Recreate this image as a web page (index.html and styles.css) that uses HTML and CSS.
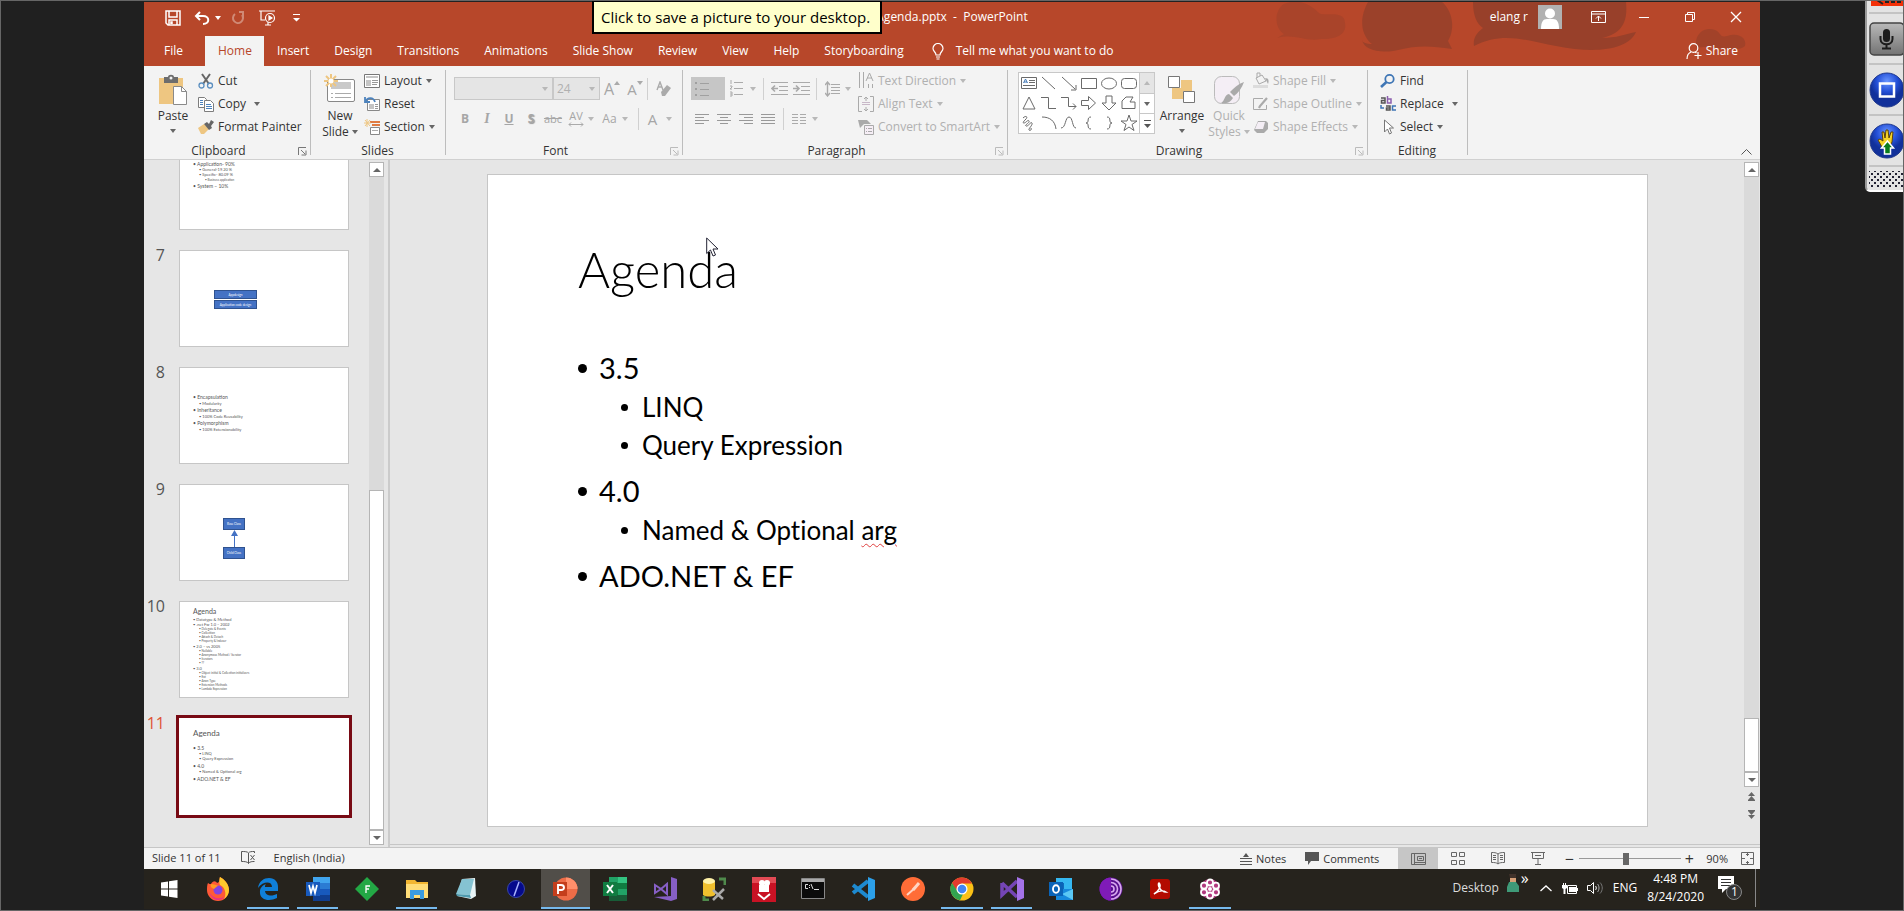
FILE: index.html
```html
<!DOCTYPE html>
<html lang="en">
<head>
<meta charset="utf-8">
<title>Agenda.pptx - PowerPoint</title>
<link rel="stylesheet" href="styles.css">
</head>
<body>
<div class="app">
  <header class="header">
    <svg class="header-art" width="500" height="64" viewBox="0 0 500 64" aria-hidden="true">
      <g fill="#98402a">
        <path opacity=".45" d="M24 2C14 8 14 26 24 32l-7 4c18-5 28 4 44 1 18 0 26-6 24-16 0-14-22-6-26-10C50 2 38-4 24 2z"/>
        <path opacity=".9" d="M108 0C98 18 102 34 112 42c-6 0-10-2-10-4 2 10 18 14 36 10 20-5 34-4 54-1l-4-8C196 26 192 8 182 0z"/>
        <path d="M213 0c0 14 4 22 10 26-8 6-10 12-9 18 30-16 56-4 82 0 40 8 72 4 80-14-10 2-20 6-34 6 20-4 26-16 24-36z"/>
        <path opacity=".7" d="M437 46c-4-12 6-22 18-18 6 2 4 8 12 6 12-4 20 2 18 10-8 8-34-2-48 2z"/>
      </g>
    </svg>
    <div class="titlebar">
      <div class="quick">
        <button class="q-save" aria-label="Save"><svg width="16" height="16" viewBox="0 0 16 16" fill="none" stroke="#fff" stroke-width="1.5"><path d="M1 1h14v14H3l-2-2z"/><path d="M4 1v6h8V1M4 15v-5h8v5M6 14v-2h1v2" /></svg></button>
        <button class="q-undo" aria-label="Undo"><svg width="17" height="15" viewBox="0 0 17 15" fill="none" stroke="#fff" stroke-width="2"><path d="M6 1L2 5l4 4M2 5h7c7 0 7 8 0 8"/></svg><span class="caret"></span></button>
        <button class="q-redo" aria-label="Redo"><svg width="15" height="15" viewBox="0 0 15 15" fill="none" stroke="#d08a76" stroke-width="2"><path d="M4 3a5 5 0 1 0 7 1M8 1h4v5"/></svg></button>
        <button class="q-show" aria-label="Start From Beginning"><svg width="18" height="16" viewBox="0 0 18 16" fill="none" stroke="#fff" stroke-width="1.2"><path d="M0 1h16M2 1v9h4M6 15h6M9 12v3"/><circle cx="11" cy="8" r="4.5"/><path d="M10 6l3 2-3 2z" fill="#fff"/></svg></button>
        <button class="q-more" aria-label="Customize"><svg width="7" height="8" viewBox="0 0 7 8" fill="#fff"><path d="M0 0h7v1H0zM0 4h7L3.500 7.500z"/></svg></button>
      </div>
      <div class="doc-title">Agenda.pptx&nbsp; -&nbsp; PowerPoint</div>
      <div class="window-tools">
        <span class="user">elang r</span>
        <svg class="avatar" width="24" height="24" viewBox="0 0 24 24"><path fill="#b1b1b1" d="M0 0h24v24H0z"/><circle cx="12" cy="8.500" r="5" fill="#fff"/><path d="M3 24c0-7 2-10 6-10h6c4 0 6 3 6 10z" fill="#fff"/></svg>
        <button aria-label="Ribbon Display Options"><svg width="15" height="12" viewBox="0 0 15 12" fill="none" stroke="#fff"><path d="M.5.5h14v11H.5zM.5 3h14M7.500 10V5M5 7.500L7.500 5 10 7.500"/></svg></button>
        <button aria-label="Minimize"><svg width="12" height="12" viewBox="0 0 12 12" stroke="#fff"><path d="M1 6.500h10"/></svg></button>
        <button aria-label="Restore"><svg width="12" height="12" viewBox="0 0 12 12" fill="none" stroke="#fff"><path d="M1.500 3.500h7v7h-7zM3.500 3.500v-2h7v7h-2"/></svg></button>
        <button aria-label="Close"><svg width="12" height="12" viewBox="0 0 12 12" stroke="#fff" stroke-width="1.300"><path d="M1 1l10 10M11 1L1 11"/></svg></button>
      </div>
    </div>
    <nav class="tabs">
      <button class="tab tab-file">File</button>
      <button class="tab tab-on">Home</button>
      <button class="tab">Insert</button>
      <button class="tab">Design</button>
      <button class="tab">Transitions</button>
      <button class="tab">Animations</button>
      <button class="tab">Slide Show</button>
      <button class="tab">Review</button>
      <button class="tab">View</button>
      <button class="tab">Help</button>
      <button class="tab">Storyboarding</button>
      <button class="tab tell"><svg width="12" height="17" viewBox="0 0 12 17" fill="none" stroke="#fff" stroke-width="1.200"><path d="M4 12c0-3-3-3.500-3-6.500a5 5 0 0 1 10 0C11 8.500 8 9 8 12zM4 14h4M4.500 16h3"/></svg>Tell me what you want to do</button>
      <button class="share"><svg width="16" height="16" viewBox="0 0 16 16" fill="none" stroke="#fff" stroke-width="1.200"><circle cx="7.500" cy="5" r="4.300"/><path d="M1 16c0-4 1.500-6 4-7M9 9l1.500 1M12 9v7M8.500 12.500h7"/></svg>Share</button>
    </nav>
  </header>

  <div class="ribbon">
    <section class="group g-clip">
      <div class="group-body">
        <button class="big b-paste"><svg width="30" height="32" viewBox="0 0 30 32"><path fill="#eec681" d="M1 4h24v26H1z"/><path fill="#6d6d6d" d="M6 3h4c0-3 6-3 6 0h4v6H6z"/><circle cx="13" cy="4" r="1.500" fill="#f3f3f3"/><path d="M15.500 12.500h8l5 5v13h-13z" fill="#fff" stroke="#8a8a8a"/><path d="M23.500 12.500v5h5" fill="none" stroke="#8a8a8a"/></svg><span>Paste</span><span class="caret"></span></button>
        <div class="stack">
          <button class="small"><svg width="16" height="16" viewBox="0 0 16 16" fill="none"><path d="M4 1l7 10M12 1L5 11" stroke="#666" stroke-width="2"/><circle cx="3.500" cy="12.500" r="2.500" stroke="#5b8fc0" stroke-width="1.300"/><circle cx="12" cy="12.500" r="2.500" stroke="#5b8fc0" stroke-width="1.300"/></svg>Cut</button>
          <button class="small"><svg width="16" height="16" viewBox="0 0 16 16" fill="#fff" stroke="#7d7d7d"><path d="M.5 1.500h6l2 2v8h-8z"/><path d="M6.500 4.500h6l3 3v8h-9z"/><path stroke="#4d83bd" d="M2 4.500h3M2 6.500h3M2 8.500h3M8 8.500h5M8 10.500h6M8 12.500h6"/></svg>Copy<span class="caret far"></span></button>
          <button class="small"><svg width="16" height="16" viewBox="0 0 16 16"><path fill="#eec681" d="M0 9l6-4 5 5-5 5H3z"/><path fill="#666" d="M6 5l3-2 2 2 2-4 3 2-3 4 1 2-3 2z"/></svg>Format Painter</button>
        </div>
      </div>
      <div class="group-label">Clipboard</div>
      <button class="launch" aria-label="Clipboard settings"><svg width="9" height="9" viewBox="0 0 9 9"><path d="M.5 8V.5H8M3 3l4 4M8 3.500V8H3.500"/></svg></button>
    </section>

    <section class="group g-slides">
      <div class="group-body">
        <button class="big"><svg width="34" height="32" viewBox="0 0 34 32"><rect x="4.500" y="5.500" width="27" height="22" rx="1.500" fill="#fff" stroke="#888"/><path fill="#c9c9c9" d="M8 8h20v7H8z"/><path stroke="#aaa" d="M8 19.500h2m2 0h16M8 23.500h2m2 0h16"/><path stroke="#eec681" stroke-width="2" d="M8 0v13M1 7h14M3 2l10 10M13 2L3 12"/><circle cx="8" cy="7" r="2.500" fill="#fff"/></svg><span>New</span><span>Slide<span class="caret"></span></span></button>
        <div class="stack">
          <button class="small"><svg width="16" height="16" viewBox="0 0 16 16" fill="none" stroke="#777"><path fill="#fff" d="M.5 1.500h15v13H.5z"/><path fill="#c5c5c5" stroke="none" d="M2 3h12v2H2zM2 7h5v6H2z"/><path stroke="#999" d="M8 7.500h6M8 9.500h6M8 11.500h5"/></svg>Layout<span class="caret"></span></button>
          <button class="small"><svg width="16" height="16" viewBox="0 0 16 16" fill="none"><path fill="#fff" stroke="#888" d="M3.500 3.500h12v11h-12z"/><path fill="#c5c5c5" d="M5 8h5v5H5z"/><path stroke="#999" d="M11 8.500h3M11 10.500h3M11 12.500h3"/><path stroke="#4d83bd" stroke-width="1.800" d="M2 5c1-3 7-5 9 1M1 1v5h5"/></svg>Reset</button>
          <button class="small"><svg width="16" height="16" viewBox="0 0 16 16" fill="none"><path stroke="#e07b42" stroke-width="2" d="M6 3h10M8 6h8"/><path stroke="#eec681" d="M3 0v8M0 4h7M1 1l5 6M6 1L1 7"/><path fill="#fff" stroke="#888" d="M6.500 8.500h9v7h-9z"/><path stroke="#aaa" d="M8 11.500h6"/></svg>Section<span class="caret"></span></button>
        </div>
      </div>
      <div class="group-label">Slides</div>
    </section>

    <section class="group g-font off">
      <div class="rows">
        <div class="row">
          <span class="pick pick-name"><select disabled aria-label="Font"><option></option></select><span class="caret"></span></span><span class="pick pick-size"><select disabled aria-label="Font size"><option>24</option></select><span class="caret"></span></span>
          <button class="tool fs-18" aria-label="Grow font">A<sup class="up"></sup></button>
          <button class="tool fs-15" aria-label="Shrink font">A<sup class="down"></sup></button>
          <i class="bar"></i>
          <button class="tool" aria-label="Clear formatting"><svg width="15" height="16" viewBox="0 0 15 16"><path d="M1 9l3-8 3 8M2 6h4" fill="none" stroke="#aaa" stroke-width="1.400"/><path fill="#aaa" d="M5 11l6-7 4 3-6 8H6z"/></svg></button>
        </div>
        <div class="row">
          <button class="tool"><b>B</b></button><button class="tool"><em class="serif">I</em></button><button class="tool"><u><b>U</b></u></button><button class="tool shadow"><b>S</b></button><button class="tool abc"><s>abc</s></button><button class="tool av"><span class="av-mark">AV<svg width="16" height="5" viewBox="0 0 16 5" fill="none" stroke="#aaa"><path d="M1 2.500h14M3 .5l-2 2 2 2M13 .5l2 2-2 2"/></svg></span><span class="caret"></span></button><button class="tool aa">Aa<span class="caret"></span></button><i class="bar"></i><button class="tool fs-15 fc">A<span class="caret"></span></button>
        </div>
      </div>
      <div class="group-label">Font</div>
      <button class="launch" aria-label="Font settings"><svg width="9" height="9" viewBox="0 0 9 9"><path d="M.5 8V.5H8M3 3l4 4M8 3.500V8H3.500"/></svg></button>
    </section>

    <section class="group g-para off">
      <div class="group-body">
        <div class="rows">
          <div class="row">
            <button class="tool pressed" aria-label="Bullets"><svg width="15" height="16" viewBox="0 0 15 16" stroke="#a0a0a0"><path stroke-width="2" d="M0 2h2M0 8h2M0 14h2"/><path d="M5 2.500h9M5 8.500h9M5 14.500h9"/></svg></button>
            <button class="tool wide" aria-label="Numbering"><svg width="15" height="17" viewBox="0 0 15 17" fill="none" stroke="#aaa"><path d="M2 0v4M1 6h2v1l-2 2h2M1 12h2v4H1M1 14h2M5 2.500h9M5 8.500h9M5 14.500h9"/></svg><span class="caret"></span></button>
            <i class="bar"></i>
            <button class="tool" aria-label="Decrease indent"><svg width="17" height="14" viewBox="0 0 17 14" fill="none" stroke="#aaa"><path d="M0 .5h17M8 4.500h9M8 8.500h9M0 12.500h17"/><path stroke-width="1.600" d="M7 6.500H1M4 3.500l-3 3 3 3"/></svg></button>
            <button class="tool" aria-label="Increase indent"><svg width="17" height="14" viewBox="0 0 17 14" fill="none" stroke="#aaa"><path d="M0 .5h17M8 4.500h9M8 8.500h9M0 12.500h17"/><path stroke-width="1.600" d="M0 6.500h6M3 3.500l3 3-3 3"/></svg></button>
            <i class="bar"></i>
            <button class="tool wide ls" aria-label="Line spacing"><svg width="15" height="16" viewBox="0 0 15 16" fill="none" stroke="#aaa"><path d="M6 3.500h9M6 6.500h9M6 9.500h9M6 12.500h9"/><path stroke-width="1.400" d="M2.500 1v14M0 4l2.500-3L5 4M0 12l2.500 3L5 12"/></svg><span class="caret"></span></button>
          </div>
          <div class="row">
            <button class="tool" aria-label="Align left"><svg width="14" height="12" viewBox="0 0 14 12" stroke="#999"><path d="M0 1.500h14M0 4.500h9M0 7.500h14M0 10.500h9"/></svg></button>
            <button class="tool" aria-label="Center"><svg width="14" height="12" viewBox="0 0 14 12" stroke="#999"><path d="M0 1.500h14M3 4.500h8M0 7.500h14M3 10.500h8"/></svg></button>
            <button class="tool" aria-label="Align right"><svg width="14" height="12" viewBox="0 0 14 12" stroke="#999"><path d="M0 1.500h14M5 4.500h9M0 7.500h14M5 10.500h9"/></svg></button>
            <button class="tool" aria-label="Justify"><svg width="14" height="12" viewBox="0 0 14 12" stroke="#999"><path d="M0 1.500h14M0 4.500h14M0 7.500h14M0 10.500h14"/></svg></button>
            <i class="bar"></i>
            <button class="tool wide" aria-label="Columns"><svg width="14" height="12" viewBox="0 0 14 12" stroke="#aaa"><path d="M0 1.500h6m2 0h6M0 4.500h6m2 0h6M0 7.500h6m2 0h6M0 10.500h6m2 0h6"/></svg><span class="caret"></span></button>
          </div>
        </div>
        <div class="stack">
          <button class="small"><svg width="16" height="17" viewBox="0 0 16 17" fill="none" stroke="#aaa"><path d="M1.500 0v16M5.500 0v16M10.500 12v4M14.500 12v4M8 9l3.500-8L15 9M9 6h5"/></svg>Text Direction<span class="caret"></span></button>
          <button class="small"><svg width="16" height="16" viewBox="0 0 16 16" fill="none" stroke="#aaa"><path d="M4 .5H.5v15H4M12 .5h3.500v15H12M8 1v4M6 3l2-2 2 2M8 15v-4M6 13l2 2 2-2"/><path stroke="#c8b8c8" d="M4 6.500h8M4 8.500h8"/></svg>Align Text<span class="caret"></span></button>
          <button class="small"><svg width="16" height="16" viewBox="0 0 16 16"><path fill="#aaa" d="M0 1h9l4 4h-7l-4 4z"/><path fill="#f6eef6" stroke="#aaa" d="M6.500 6.500h9v9h-9z"/><path stroke="#aaa" d="M8 9.500h1m1 0h4M8 12.500h1m1 0h4"/></svg>Convert to SmartArt<span class="caret"></span></button>
        </div>
      </div>
      <div class="group-label">Paragraph</div>
      <button class="launch" aria-label="Paragraph settings"><svg width="9" height="9" viewBox="0 0 9 9"><path d="M.5 8V.5H8M3 3l4 4M8 3.500V8H3.500"/></svg></button>
    </section>

    <section class="group g-draw">
      <div class="group-body">
        <div class="gallery">
          <button aria-label="Text box"><svg viewBox="0 0 20 20"><path d="M2.500 4.500h15v11h-15z"/><path stroke="#3f76b5" d="M4.500 10L6.500 6l2 4M5 9h3"/><path d="M10 7.500h6M10 9.500h6M4 12.500h12"/></svg></button>
          <button aria-label="Line"><svg viewBox="0 0 20 20"><path d="M3 4l13 12"/></svg></button>
          <button aria-label="Arrow"><svg viewBox="0 0 20 20"><path d="M3 4l13 12M17 12v5h-5"/></svg></button>
          <button aria-label="Rectangle"><svg viewBox="0 0 20 20"><path d="M2.500 5.500h15v10h-15z"/></svg></button>
          <button aria-label="Oval"><svg viewBox="0 0 20 20"><ellipse cx="10" cy="10.500" rx="7.500" ry="5.500"/></svg></button>
          <button aria-label="Rounded rectangle"><svg viewBox="0 0 20 20"><rect x="2.500" y="5.500" width="15" height="10" rx="3"/></svg></button>
          <button aria-label="Triangle"><svg viewBox="0 0 20 20"><path d="M10 4l6 12H4z"/></svg></button>
          <button aria-label="Elbow connector"><svg viewBox="0 0 20 20"><path d="M2 4.500h7.500v11H17"/></svg></button>
          <button aria-label="Elbow arrow"><svg viewBox="0 0 20 20"><path d="M2 4.500h7.500v9H17M14 10.500l3 3-3 3"/></svg></button>
          <button aria-label="Right arrow"><svg viewBox="0 0 20 20"><path d="M2.500 7.500h7v-4l7 6.500-7 6.500v-4h-7z"/></svg></button>
          <button aria-label="Down arrow"><svg viewBox="0 0 20 20"><path d="M7 3h6v7h4l-7 7-7-7h4z"/></svg></button>
          <button aria-label="Freeform"><svg viewBox="0 0 20 20"><path d="M3 15.500V8l4-4h7l-3 5h5v6.500z"/></svg></button>
          <button aria-label="Scribble"><svg viewBox="0 0 20 20"><path d="M4 5c3-3 5-1 3 1s-4 4-2 4 4-4 5-2-5 4-3 5 5-5 6-3-4 6-3 7 3 0 2-2"/></svg></button>
          <button aria-label="Arc"><svg viewBox="0 0 20 20"><path d="M3 4c8 0 13 4 14 12"/></svg></button>
          <button aria-label="Curve"><svg viewBox="0 0 20 20"><path d="M2 15c5 0 4-11 8-11s3 11 7 11"/></svg></button>
          <button aria-label="Left brace"><svg viewBox="0 0 20 20"><path d="M12 4c-5 0-1 6-5 6 4 0 0 6 5 6"/></svg></button>
          <button aria-label="Right brace"><svg viewBox="0 0 20 20"><path d="M8 4c5 0 1 6 5 6-4 0 0 6-5 6"/></svg></button>
          <button aria-label="Star"><svg viewBox="0 0 20 20"><path d="M10 2l2 6h6l-5 3.500 2 6L10 14l-5 3.500 2-6L2 8h6z"/></svg></button>
        </div>
        <div class="gallery-nav">
          <button aria-label="Previous shapes" disabled><span class="caret flip"></span></button>
          <button aria-label="Next shapes"><span class="caret"></span></button>
          <button aria-label="All shapes"><svg width="7" height="8" viewBox="0 0 7 8" fill="#555"><path d="M0 0h7v1H0zM0 4h7L3.500 8z"/></svg></button>
        </div>
        <button class="big b-arrange"><svg width="30" height="32" viewBox="0 0 30 32"><path fill="#eec681" d="M14 6h11v11h-9v8H5V14h9z"/><path fill="#fff" stroke="#777" d="M1.500 2.500h11v11h-11zM16.500 17.500h11v11h-11z"/></svg><span>Arrange</span><span class="caret"></span></button>
        <button class="big b-quick off"><svg width="32" height="32" viewBox="0 0 32 32"><rect x="1.500" y="2.500" width="25" height="27" rx="7" fill="#f4eef5" stroke="#bbb"/><path fill="#aaa" d="M31 8c-2 6-6 11-10 14l-4-4c4-4 8-8 14-10zM16 20l4 4c-3 5-8 6-12 5 4-2 3-8 8-9z"/></svg><span>Quick</span><span>Styles<span class="caret"></span></span></button>
        <div class="stack off">
          <button class="small"><svg width="16" height="17" viewBox="0 0 16 17"><path fill="none" stroke="#aaa" d="M3 6l6-3 4 6-7 3zM4 6V1h3v3"/><path fill="#aaa" d="M12 6c4 0 4 3 3 6z"/><path fill="#dcdcdc" d="M0 13h15v3H0z"/></svg>Shape Fill<span class="caret"></span></button>
          <button class="small"><svg width="16" height="16" viewBox="0 0 16 16" fill="none" stroke="#aaa"><path d="M10 2.500H.5v11h13V9"/><path stroke-width="2.200" d="M14 2L7 10l-1 2"/></svg>Shape Outline<span class="caret"></span></button>
          <button class="small"><svg width="16" height="16" viewBox="0 0 16 16"><path fill="#aaa" d="M5 2h8l2 2v6l-4 4H4l-3-3z"/><path fill="#f4eef5" d="M5 3h7l-2 7H2z"/></svg>Shape Effects<span class="caret"></span></button>
        </div>
      </div>
      <div class="group-label">Drawing</div>
      <button class="launch off" aria-label="Drawing settings"><svg width="9" height="9" viewBox="0 0 9 9"><path d="M.5 8V.5H8M3 3l4 4M8 3.500V8H3.500"/></svg></button>
    </section>

    <section class="group g-edit">
      <div class="group-body">
        <div class="stack">
          <button class="small"><svg width="16" height="16" viewBox="0 0 16 16" fill="none" stroke="#3f76b5"><circle cx="9.500" cy="6" r="4.200" stroke-width="1.800"/><path stroke-width="2.600" d="M6.500 9L1 14"/></svg>Find</button>
          <button class="small"><svg width="16" height="16" viewBox="0 0 16 16" fill="none" stroke-width="1.500"><path stroke="#555" d="M1 2h4v5H1.500V4.500H5M10 8"/><path stroke="#8c5fae" d="M7.500 0v7h3.500V3H7.500"/><path stroke="#555" d="M6 10h4v4H6.500v-2H10"/><path stroke="#3f76b5" d="M16 10h-3.500v4H16M1 9v3h3"/></svg>Replace<span class="caret far"></span></button>
          <button class="small"><svg width="16" height="16" viewBox="0 0 16 16" fill="#fff" stroke="#777"><path d="M4.500 1v12l3-3 2 5 2-1-2-5h4z"/></svg>Select<span class="caret"></span></button>
        </div>
      </div>
      <div class="group-label">Editing</div>
    </section>
    <button class="collapse" aria-label="Collapse ribbon"><svg width="11" height="6" viewBox="0 0 11 6" fill="none" stroke="#555"><path d="M.5 5.500l5-5 5 5"/></svg></button>
  </div>

  <main class="work">
    <aside class="thumbs">
      <ol class="thumb-list">
        <li><span class="num"></span><div class="thumb"><ul class="mini m6"><li>Application- 90%</li><li class="l2">General-19.20 %</li><li class="l2">Specific- 80.09 %</li><li class="l3">Business application</li><li>System – 10%</li></ul></div></li>
        <li><span class="num">7</span><div class="thumb t7"><span class="box">Appdesign</span><span class="box">Application code design</span></div></li>
        <li><span class="num">8</span><div class="thumb"><ul class="mini m8"><li>Encapsulation</li><li class="l2">Modularity</li><li>Inheritance</li><li class="l2">100% Code Reusability</li><li>Polymorphism</li><li class="l2">100% Extensionability</li></ul></div></li>
        <li><span class="num">9</span><div class="thumb t9"><span class="box">Base Class</span><svg width="7" height="17" viewBox="0 0 7 17"><path fill="#4472c4" d="M3 6h1v11H3zM3.500 0L7 6H0z"/></svg><span class="box">Child Class</span></div></li>
        <li><span class="num">10</span><div class="thumb"><ul class="mini m10"><li class="h">Agenda</li><li>Datatype &amp; Method</li><li>.net Fw 1.0 – 2002</li><li class="l2">Delegate &amp; Events</li><li class="l2">Collection</li><li class="l2">Attach &amp; Detach</li><li class="l2">Property &amp; Indexer</li><li>2.0 – vs 2005</li><li class="l2">Nullable</li><li class="l2">Anonymous Method / Iterator</li><li class="l2">Iterators</li><li class="l2">??</li><li>3.0</li><li class="l2">Object initial &amp; Collection initializers</li><li class="l2">Ext</li><li class="l2">Anon Type</li><li class="l2">Extension Methods</li><li class="l2">Lambda Expression</li></ul></div></li>
        <li class="current"><span class="num">11</span><div class="thumb"><ul class="mini m11"><li class="h">Agenda</li><li>3.5</li><li class="l2">LINQ</li><li class="l2">Query Expression</li><li>4.0</li><li class="l2">Named &amp; Optional arg</li><li>ADO.NET &amp; EF</li></ul></div></li>
      </ol>
      <div class="scroll scroll-left"><button aria-label="Up"><span class="caret flip"></span></button><div class="before"></div><div class="grip"></div><button aria-label="Down"><span class="caret"></span></button></div>
    </aside>
    <section class="editor">
      <article class="slide">
        <h1>Agenda</h1>
        <ul>
          <li>3.5</li>
          <li class="sub">LINQ</li>
          <li class="sub">Query Expression</li>
          <li>4.0</li>
          <li class="sub">Named &amp; Optional <span class="typo">arg</span></li>
          <li>ADO.NET &amp; EF</li>
        </ul>
        <svg class="cursor" width="14" height="21" viewBox="0 0 14 21" fill="#fff" stroke="#223"><path d="M.7 1v15.500l3.800-3.500 2.500 6 2.500-1-2.500-6H12z"/></svg>
      </article>
      <div class="scroll scroll-right"><button aria-label="Up"><span class="caret flip"></span></button><div class="before"></div><div class="grip"></div><button aria-label="Down"><span class="caret"></span></button>
        <button class="jump" aria-label="Previous slide"><svg width="9" height="9" viewBox="0 0 9 9" fill="#666"><path d="M4.500 0L8 4H1zM4.500 4L8 8H1z"/><path d="M1 8h7v1H1z"/></svg></button>
        <button class="jump" aria-label="Next slide"><svg width="9" height="9" viewBox="0 0 9 9" fill="#666"><path d="M1 0h7v1H1zM4.500 5L8 1H1zM4.500 9L8 5H1z"/></svg></button>
      </div>
    </section>
  </main>

  <footer class="status">
    <span class="s-count">Slide 11 of 11</span>
    <svg class="s-book" width="15" height="13" viewBox="0 0 15 13" fill="none" stroke="#555"><path d="M7.500 2c-1-1.500-4-1.500-7-1.500v10c3 0 6 0 7 2zM7.500 2c1-1.500 3-1.500 6-1.500V2M7.500 12.500c1-2 4-2 6-2M9.500 4l4 5M13.500 4l-4 5"/></svg>
    <span>English (India)</span>
    <div class="s-right">
      <button class="s-notes"><svg width="12" height="12" viewBox="0 0 12 12"><path fill="#555" d="M6 0l3 4H3z"/><path stroke="#555" d="M0 5.500h12M0 8.500h12M0 11.500h12"/></svg>Notes</button>
      <button class="s-comments"><svg width="14" height="13" viewBox="0 0 14 13" fill="#555"><path d="M0 0h14v9H6l-3 4V9H0z"/></svg>Comments</button>
      <button class="view on" aria-label="Normal"><svg width="15" height="12" viewBox="0 0 15 12" fill="none" stroke="#666"><path d="M.5.500h14v11H.500zM3.500 0v12M6.500 3.500h6v4h-6zM4 9.500h10M8 5.500h3"/></svg></button>
      <button class="view" aria-label="Slide sorter"><svg width="14" height="13" viewBox="0 0 14 13" fill="none" stroke="#666"><path d="M.5.500h5v4h-5zM8.500.500h5v4h-5zM.5 8.500h5v4h-5zM8.500 8.500h5v4h-5z"/></svg></button>
      <button class="view" aria-label="Reading view"><svg width="14" height="13" viewBox="0 0 14 13" fill="none" stroke="#666"><path d="M7 2C5 .5 3 .5.500.500v10c3 0 5 0 6.500 1.500 1.500-1.500 3.500-1.500 6.500-1.500v-10C11 .5 9 .5 7 2v10M2 3.500h3M2 5.500h3M2 7.500h3M9 3.500h3M9 5.500h3M9 7.500h3"/></svg></button>
      <button class="view" aria-label="Slide show"><svg width="14" height="13" viewBox="0 0 14 13" fill="none" stroke="#666"><path d="M0 .5h14M1.500.500v6h11v-6M7 7v5M4 12.500h6M4 3.500h6"/></svg></button>
      <button class="zoom-step out" aria-label="Zoom out">−</button>
      <input type="range" min="0" max="100" value="46" aria-label="Zoom">
      <button class="zoom-step" aria-label="Zoom in">+</button>
      <span class="percent">90%</span>
      <button class="fit" aria-label="Fit slide"><svg width="13" height="13" viewBox="0 0 13 13" fill="none" stroke="#666"><path d="M.5.500h12v12H.500zM6.500 1v3M6.500 12V9M1 6.500h3M12 6.500H9M5 3l1.500-1.500L8 3M5 10l1.500 1.500L8 10"/></svg></button>
    </div>
  </footer>

  <div class="taskbar">
    <div class="apps">
      <button aria-label="Start"><svg width="24" height="24" viewBox="0 0 24 24" fill="#fff"><path d="M4 5.500l7-1v7H4zM12 4.300l8.500-1.300v8.500H12zM4 12.500h7v7l-7-1zM12 12.500h8.500V21L12 19.700z"/></svg></button>
      <button aria-label="Firefox"><svg width="24" height="24" viewBox="0 0 24 24"><path fill="#ff5a36" d="M2 6c1 1 2 1 3 1 2-4 5-3 6-1 4-1 2-5 3-6 4 2 9 7 9 13a11 11 0 0 1-22 0c0-3 0-5 1-7z"/><path fill="#ffca2c" d="M14 0c4 2 9 7 9 13 0 3-2 7-5 9 3-5 1-12-4-14-1-2-1-5 0-8z"/><path fill="#e8308a" d="M3 15c4 7 12 8 16 4-3 5-12 7-16-4z"/><circle cx="12" cy="13" r="4.500" fill="#8343e0"/><path fill="#ff9a20" d="M5 7c3 0 5 1 8 2-3 0-3 2-5 3-3-1-4-3-3-5z"/></svg></button>
      <button class="run" aria-label="Edge"><svg width="24" height="24" viewBox="0 0 24 24"><path fill="#0f7fd8" d="M2 11C3 4 8 1 13 1c6 0 9 4 9 9v4H9c1 6 8 5 12 3v4C13 25 3 23 4 14c0-3 3-6 6-7-1 1-1 2-1 3h7c0-6-9-6-14 1z"/></svg></button>
      <button class="run" aria-label="Word"><svg width="26" height="24" viewBox="0 0 26 24"><path fill="#41a5ee" d="M8 0h17v6H8z"/><path fill="#2b7cd3" d="M8 6h17v6H8z"/><path fill="#185abd" d="M8 12h17v6H8z"/><path fill="#103f91" d="M8 18h17v6H8z"/><path fill="#185abd" d="M1 5h14v14H1z"/><path fill="none" stroke="#fff" stroke-width="1.700" d="M4 8l2 8 2-7 2 7 2-8"/></svg></button>
      <button aria-label="Forms app"><svg width="24" height="24" viewBox="0 0 24 24"><path fill="#23a845" d="M12 0l12 12-12 12L0 12z"/><path stroke="#fff" stroke-width="1.300" fill="none" d="M11 16V9h4M11 12h3"/></svg></button>
      <button class="run" aria-label="File Explorer"><svg width="24" height="22" viewBox="0 0 24 22"><path fill="#f2b632" d="M1 2h9l2 2h11v16H1z"/><path fill="#ffdd78" d="M1 6h22v14H1z"/><path fill="#3a9be0" d="M5 12h14v9h-4v-4H9v4H5z"/></svg></button>
      <button aria-label="Notepad"><svg width="24" height="24" viewBox="0 0 24 24"><path fill="#e8f4f6" d="M8 2l13-1 1 18-5 3-14-3z"/><path fill="#85c3d2" d="M8 2l12 0-4 16-14-1z"/><path fill="#4e9aae" d="M2 17l14 1 1 3-14-2z"/></svg></button>
      <button aria-label="Eclipse tool"><svg width="20" height="20" viewBox="0 0 20 20"><circle cx="10" cy="10" r="8.500" fill="#050a8c" stroke="#3847a8"/><path d="M13 3L8 17" stroke="#aab4ff" stroke-width="1.500"/></svg></button>
      <button class="run active" aria-label="PowerPoint"><svg width="26" height="24" viewBox="0 0 26 24"><circle cx="14" cy="12" r="11.500" fill="#ed6c47"/><path fill="#ff8f6b" d="M14 .5A11.500 11.500 0 0 1 25.500 12H14z"/><path fill="#c43e1c" d="M1 5h14v14H1z"/><path fill="none" stroke="#fff" stroke-width="1.900" d="M6 17V8h3c4 0 4 5 0 5H6"/></svg></button>
      <button aria-label="Excel"><svg width="26" height="24" viewBox="0 0 26 24"><path fill="#21a366" d="M7 0h9v6H7zM16 12h9v6h-9z"/><path fill="#33c481" d="M16 0h9v6h-9z"/><path fill="#107c41" d="M7 6h9v12H7zM16 6h9v6h-9z"/><path fill="#185c37" d="M7 18h18v6H7z"/><path fill="#107c41" d="M1 5h14v14H1z"/><path stroke="#fff" stroke-width="2" d="M5 8l6 8M11 8l-6 8"/></svg></button>
      <button aria-label="Visual Studio 2017"><svg width="24" height="24" viewBox="0 0 24 24"><path fill="#865fc5" d="M18 0l6 2v20l-6 2-17-4 17-1z"/><path fill="none" stroke="#865fc5" stroke-width="2" d="M2 8v8l6-4zM8 12l6 5V7z"/></svg></button>
      <button aria-label="SQL Server Management"><svg width="24" height="24" viewBox="0 0 24 24"><path fill="#f0c02e" d="M1 4h12v14c-3 2-9 2-12 0z"/><ellipse cx="7" cy="4" rx="6" ry="3" fill="#fff2a8"/><path stroke="#4f8a4c" stroke-width="3" fill="none" d="M17 2h6v6M2 19v4h5"/><path stroke="#aaa" stroke-width="2.500" d="M11 13l10 9M22 12L11 23"/></svg></button>
      <button aria-label="Recorder"><svg width="24" height="26" viewBox="0 0 24 26"><path fill="#c91224" d="M0 1h24v25H0z"/><path fill="#e24a54" d="M0 1h24v6H0z"/><circle cx="10" cy="7" r="3" fill="#fff"/><circle cx="15" cy="7" r="3" fill="#fff"/><path fill="#fff" d="M7 9h10v7H7z"/><path fill="none" stroke="#fff" stroke-width="2" d="M6 18l6 5 6-5"/></svg></button>
      <button aria-label="Command Prompt"><svg width="24" height="22" viewBox="0 0 24 22"><path fill="#0b0b0b" stroke="#888" d="M.5.500h23v20H.500z"/><path fill="#aaa" d="M1 1h22v3H1z"/><path stroke="#ddd" fill="none" d="M7 6.500H4.500v4H7M8.500 7v1M8.500 9v1M10 6l2 5M13 11.500h5"/></svg></button>
      <button aria-label="Visual Studio Code"><svg width="24" height="24" viewBox="0 0 24 24"><path fill="none" stroke="#1e8ad0" stroke-width="4" d="M17 4L2 16M2 8l15 12"/><path fill="#2ca0ea" d="M17 0l7 3v18l-7 3z"/></svg></button>
      <button aria-label="Postman"><svg width="24" height="24" viewBox="0 0 24 24"><circle cx="12" cy="12" r="12" fill="#ff6c37"/><path stroke="#ffd5c5" stroke-width="2" d="M6 18l9-8"/><path stroke="#ffd5c5" stroke-width="3" d="M12 13l6-7"/></svg></button>
      <button class="run" aria-label="Chrome"><svg width="24" height="24" viewBox="0 0 24 24"><circle cx="12" cy="12" r="11.500" fill="#fbc116"/><path fill="#e33b2e" d="M2 6a11.500 11.500 0 0 1 20 0.500H12L6 13z"/><path fill="#32a350" d="M2 6l6 9 5 2-3 6.300A11.500 11.500 0 0 1 2 6z"/><circle cx="12" cy="12" r="5.500" fill="#fff"/><circle cx="12" cy="12" r="4.300" fill="#4285f4"/></svg></button>
      <button class="run" aria-label="Visual Studio"><svg width="24" height="24" viewBox="0 0 24 24"><path fill="none" stroke="#7445b5" stroke-width="3.500" d="M2 6v12L17 4M2 6l15 14"/><path fill="#a472e8" d="M17 0l7 3v18l-7 3z"/></svg></button>
      <button aria-label="Outlook"><svg width="26" height="24" viewBox="0 0 26 24"><path fill="#35b8f1" d="M8 1h16v11H8z"/><path fill="#0f6cbd" d="M8 6h8v6H8z"/><path fill="#1689dc" d="M8 12h17v11H8z"/><path fill="#5ac8f5" d="M25 12v11L14 17z"/><path fill="#0a64b8" d="M1 5h14v14H1z"/><ellipse cx="8" cy="12" rx="3" ry="3.800" fill="none" stroke="#fff" stroke-width="1.900"/></svg></button>
      <button aria-label="Tor Browser"><svg width="24" height="24" viewBox="0 0 24 24"><circle cx="12" cy="12" r="11.500" fill="#58108f"/><path fill="none" stroke="#d9a8f0" stroke-width="1.600" d="M12 2a10 10 0 0 1 0 20M12 5.500a6.500 6.500 0 0 1 0 13M12 9a3 3 0 0 1 0 6"/><path fill="#7f1bb8" d="M12 .5v23A11.500 11.500 0 0 1 12 .5z"/></svg></button>
      <button aria-label="Acrobat Reader"><svg width="20" height="20" viewBox="0 0 20 20"><rect width="20" height="20" rx="3" fill="#b30b00"/><path fill="none" stroke="#fff" stroke-width="1.500" d="M4 15c4-2 8-8 5-11-2 1 1 9 7 9-3-2-8-1-12 2z"/></svg></button>
      <button class="run" aria-label="GoToMeeting"><svg width="24" height="24" viewBox="0 0 24 24"><circle cx="12" cy="12" r="10" fill="#b2397f"/><g fill="none" stroke="#fff" stroke-width="1.800"><circle cx="12" cy="5.500" r="3"/><circle cx="12" cy="18.500" r="3"/><circle cx="6" cy="8.700" r="3"/><circle cx="18" cy="8.700" r="3"/><circle cx="6" cy="15.300" r="3"/><circle cx="18" cy="15.300" r="3"/></g><circle cx="12" cy="12" r="2" fill="#fff"/></svg></button>
    </div>
    <div class="tray">
      <span class="t-desk">Desktop</span>
      <svg class="t-person" width="14" height="18" viewBox="0 0 14 18"><path fill="#d6a077" d="M4 2h6v7H4z"/><path fill="#40322a" d="M3 0h7v4H4z"/><path fill="#3f9a78" d="M3 8h7l3 4v6H1v-5z"/></svg>
      <span class="t-more">»</span>
      <button class="t-up" aria-label="Hidden icons"><svg width="12" height="7" viewBox="0 0 12 7" fill="none" stroke="#fff" stroke-width="1.300"><path d="M.5 6L6 1l5.500 5"/></svg></button>
      <svg class="t-batt" width="17" height="13" viewBox="0 0 17 13"><path fill="none" stroke="#fff" d="M5.500 3.500h9v8h-9zM15.500 6v3"/><path fill="#fff" d="M7 5h7v5H7zM0 3h5v3L3.500 7v5h-2V7L0 6zM1 1h1v2H1zM3 1h1v2H3z"/></svg>
      <svg class="t-vol" width="17" height="14" viewBox="0 0 17 14" fill="none" stroke="#fff"><path d="M.5 4.500h3l3-3v11l-3-3h-3zM8.500 5c1 1 1 3 0 4"/><path stroke="#aaa" d="M10.500 3c2 2 2 6 0 8"/><path stroke="#777" d="M13 1.500c3 3 3 8 0 11"/></svg>
      <span class="t-lang">ENG</span>
      <span class="t-clock"><time>4:48 PM</time><time>8/24/2020</time></span>
      <button class="t-note" aria-label="1 notification"><svg width="26" height="24" viewBox="0 0 26 24"><path fill="#fff" d="M1 0h16v13h-8l-4 4v-4H1z"/><path stroke="#333" d="M4 3.500h10M4 6.500h10M4 9.500h10"/><circle cx="17" cy="16" r="7.500" fill="#333" stroke="#888"/></svg><span>1</span></button>
    </div>
  </div>
</div>

<div class="tip">Click to save a picture to your desktop.</div>

<div class="dock">
  <div class="d-top"><svg width="32" height="6" viewBox="0 0 32 6"><path fill="#f23008" d="M0 0h32v6H0z"/><path stroke="#222" stroke-width="2" fill="none" d="M6 0l6 4M14 2h4M20 2h4M26 2h4"/></svg></div>
  <button aria-label="Microphone"><svg width="34" height="34" viewBox="0 0 34 34"><defs><linearGradient id="gm" x2="0" y2="1"><stop stop-color="#b9b9b9"/><stop offset="1" stop-color="#737373"/></linearGradient></defs><rect x="1" y="1" width="34" height="32" rx="4" fill="url(#gm)" stroke="#444" stroke-width="1.500"/><rect x="14" y="7" width="7" height="13" rx="3.500" fill="#1c1c1c"/><path fill="none" stroke="#1c1c1c" stroke-width="2" d="M11.500 14v3c0 7 12 7 12 0v-3M17.500 22v4M13 26.500h9"/></svg></button>
  <button aria-label="Screen"><svg width="34" height="36" viewBox="0 0 34 36"><defs><radialGradient id="gb" cy=".25"><stop stop-color="#6a96ff"/><stop offset=".6" stop-color="#2450d8"/><stop offset="1" stop-color="#11309a"/></radialGradient></defs><circle cx="18" cy="18" r="17" fill="url(#gb)" stroke="#223a8c"/><path fill="none" stroke="#fff" stroke-width="2.500" d="M11 11.500h14v13H11z"/></svg></button>
  <button aria-label="Raise hand"><svg width="34" height="36" viewBox="0 0 34 36"><circle cx="18" cy="18" r="17" fill="url(#gb)" stroke="#223a8c"/><path fill="#f5d327" stroke="#5c4208" d="M13 24l-4-7 2-1 3 2-1-9h2l1 6 1-8h2l1 8 2-6h2l-1 10-3 6z"/><path fill="#0a7d1c" stroke="#fff" stroke-width="1.500" d="M18.500 18l6 7h-3v6h-6v-6h-3z"/></svg></button>
  <div class="d-grip"></div>
</div>
</body>
</html>
```

FILE: styles.css
```css
* { box-sizing: border-box; }
html, body { height: 100%; }
body {
  margin: 0;
  padding: 0 143px;
  background: #202020;
  border: 1px solid #666;
  position: relative;
  overflow: hidden;
  font: 12px/16px "Open Sans", "Noto Sans", sans-serif;
  color: #333;
}
button {
  border: 0;
  padding: 0;
  margin: 0;
  background: none;
  font: inherit;
  color: inherit;
  display: flex;
  align-items: center;
  justify-content: center;
  flex: none;
  white-space: nowrap;
}
svg { display: block; flex: none; }
ul, ol { list-style: none; margin: 0; padding: 0; }

.app {
  height: 100%;
  display: grid;
  grid-template-rows: auto auto 1fr auto auto;
  border-top: 1px solid #222;
  padding-bottom: 1px;
}
.caret {
  display: inline-block;
  flex: none;
  border: 3px solid transparent;
  border-top-color: #666;
  border-bottom: 0;
  border-top-width: 4px;
}
.caret.flip { border-top: 0; border-bottom: 4px solid #666; }

/* Title bar and tabs */
.header { position: relative; background: #b7472a; color: #fff; height: 64px; display: grid; grid-template-rows: 34px 30px; }
.header-art { position: absolute; right: 0; top: 0; }
.titlebar, .tabs { position: relative; }
.titlebar { display: grid; grid-template-columns: 1fr auto 1fr; align-items: start; line-height: 30px; }
.quick { display: flex; align-items: center; height: 32px; padding-left: 21px; }
.quick .caret { border-top-color: #fff; margin-left: 4px; }
.q-undo { margin-left: 13px; }
.q-redo { margin-left: 10px; }
.q-show { margin-left: 13px; }
.q-more { margin-left: 16px; }
.window-tools { display: flex; align-items: center; justify-content: flex-end; height: 30px; padding-right: 18px; }
.window-tools button { width: 12px; margin-left: 34px; }
.avatar { margin: 0 -4px 0 10px; }
.tabs { display: flex; }
.tab { padding: 0 12px 0 13px; }
.tab-file { padding: 0 22px 0 20px; }
.tab-on { background: #f3f3f3; color: #b7472a; }
.tell { gap: 12px; margin-left: 3px; }
.share { margin-left: auto; padding-right: 22px; gap: 4px; }

/* Ribbon */
.ribbon { display: flex; height: 94px; background: #f3f3f3; border-bottom: 1px solid #d0d0d0; position: relative; }
.group {
  display: grid;
  grid-template: 1fr 18px / 100%;
  flex: none;
  position: relative;
  background: linear-gradient(#bdbdbd, #bdbdbd) right 4px / 1px 85px no-repeat;
}
.group-label { text-align: center; padding: 2px 18px 0 0; }
.group-body { display: flex; padding-top: 3px; }
.g-clip { width: 167px; }
.g-slides { width: 135px; }
.g-font { width: 237px; }
.g-para { width: 325px; }
.g-draw { width: 360px; }
.g-edit { width: 100px; }
.g-slides .group-label, .g-edit .group-label { padding-right: 2px; }
.off { color: #b0b0b0; }
.off .group-label { color: #333; }
.off .caret { border-top-color: #b8b8b8; }
.launch { position: absolute; right: 4px; bottom: 3px; }
.launch path { fill: none; stroke: #777; }
.off .launch path, .launch.off path { stroke: #bbb; }
.big { flex-direction: column; justify-content: flex-start; padding-top: 5px; width: 44px; height: 71px; }
.big span { line-height: 16px; }
.big > svg { margin-bottom: 2px; }
.big > .caret { margin-top: 5px; }
.big span .caret { margin: 0 0 2px 3px; }
.stack { display: flex; flex-direction: column; align-items: flex-start; }
.small { height: 23px; gap: 4px; }
.small .far { margin-left: 4px; }
.g-clip .group-body { padding-left: 7px; }
.g-clip .stack { margin-left: 3px; }
.g-slides .group-body { padding-left: 7px; }
.g-slides .stack { margin-left: 2px; }

.rows { display: flex; flex-direction: column; gap: 7px; padding-top: 11px; }
.group-body .rows { padding-top: 8px; }
.row { display: flex; height: 23px; align-items: center; }
.g-font .rows { padding-left: 8px; }
.pick { position: relative; display: block; height: 23px; flex: none; }
.pick select { appearance: none; width: 100%; height: 100%; border: 1px solid #c8c8c8; border-radius: 0; background: #e5e5e5; font: inherit; color: #b0b0b0; padding: 0 3px; opacity: 1; }
.pick .caret { position: absolute; right: 5px; top: 10px; }
.pick-name { width: 99px; }
.pick-size { width: 47px; }
.tool { width: 22px; height: 23px; color: #a6a6a6; }
.bar { width: 1px; height: 22px; background: #d0d0d0; margin: 0 6px; flex: none; }
.fs-18 { font-size: 16px; width: 24px; }
.fs-15 { font-size: 15px; }
.up, .down { border: 3px solid transparent; width: 0; height: 0; margin-bottom: 12px; }
.up { border-top: 0; border-bottom: 4px solid #aaa; }
.down { border-bottom: 0; border-top: 4px solid #aaa; }
.g-font .row:first-child .bar { margin: 0 4px 0 1px; }
.serif { font-family: "Liberation Serif", serif; font-weight: bold; font-size: 14px; }
.shadow { text-shadow: 1px 1px 1px #999; }
.abc { font-size: 11px; }
.av { width: 34px; gap: 4px; font-size: 11px; }
.av-mark { display: grid; justify-items: center; line-height: 12px; }
.aa { width: 34px; gap: 5px; }
.fc { width: 30px; gap: 9px; }
.g-para .rows { padding-left: 8px; width: 167px; }
.g-para .bar { margin: 0 4px; }
.g-para .pressed { width: 34px; background: #c6c6c6; justify-content: flex-start; padding-left: 4px; }
.g-para .wide { width: 34px; gap: 6px; }
.g-para .ls { gap: 5px; }
.g-para .stack { margin-left: 8px; }

.gallery { display: grid; grid-template: repeat(3, 20px) / repeat(6, 20px); border: 1px solid #c8c8c8; background: #fff; margin: 3px 0 0 10px; height: 62px; }
.gallery svg { width: 20px; height: 20px; fill: none; stroke: #6a6a6a; }
.gallery-nav { display: grid; grid-template-rows: repeat(3, 1fr); width: 15px; height: 62px; margin-top: 3px; border: solid #c8c8c8; border-width: 1px 1px 1px 0; background: #fff; }
.gallery-nav button + button { border-top: 1px solid #c8c8c8; }
.gallery-nav button:disabled { background: #e5e5e5; opacity: 1; }
.gallery-nav button:disabled .caret { border-bottom-color: #b8b8b8; }
.b-arrange { margin-left: 5px; }
.b-quick { margin-left: 3px; }
.g-draw .stack { margin-left: 2px; }
.g-edit .group-body { padding-left: 12px; }
.collapse { position: absolute; right: 8px; bottom: 4px; }

/* Work area */
.work { display: grid; grid-template-columns: 246px 1fr; background: #e6e6e6; min-height: 0; overflow: hidden; }
.thumbs { display: grid; grid-template-columns: 1fr 15px; padding-right: 4px; border-right: 2px solid #cbcbcb; min-height: 0; }
.thumb-list { display: flex; flex-direction: column; justify-content: flex-end; gap: 20px; padding-bottom: 32px; min-height: 0; overflow: hidden; }
.thumb-list > li { display: flex; gap: 14px; flex: none; }
.num { width: 21px; text-align: right; font-size: 16px; line-height: 14px; color: #555; margin-top: -2px; height: 14px; }
.thumb { width: 170px; height: 97px; background: #fff; border: 1px solid #c6c6c6; overflow: hidden; }
.current .thumb { outline: 3px solid #780a14; border-color: #fff; }
.current .num { color: #df5334; }
.mini { padding-left: 13px; font: 5px/6px Lato, sans-serif; color: #555; }
.mini li::before { content: "• "; }
.mini .h::before { content: ""; }
.mini .l2 { padding-left: 6px; font-size: 4px; line-height: 5px; }
.mini .l3 { padding-left: 12px; font-size: 3px; line-height: 6px; }
.mini .h { font-size: 8px; line-height: 12px; }
.m6 { padding-top: 27px; }
.m8 { padding-top: 26px; }
.m8 li { line-height: 7px; }
.m8 .l2 { line-height: 6px; }
.m10 { padding-top: 3px; font-size: 4px; line-height: 5px; }
.m10 .h { font-size: 7px; }
.m10 .l2 { font-size: 3px; line-height: 4px; }
.m10 .l2 + li:not(.l2) { margin-top: 1px; }
.m11 { padding-top: 8px; }
.m11 .h { margin-bottom: 6px; }
.m11 .l2 { line-height: 5px; }
.m11 .l2 + li:not(.l2) { margin-top: 2px; }
.box { display: flex; align-items: center; justify-content: center; background: #4472c4; border: 1px solid #2f528f; color: #fff; font: 3px/4px Lato, sans-serif; flex: none; }
.t7 { padding: 39px 0 0 34px; display: flex; flex-direction: column; gap: 1px; }
.t7 .box { width: 43px; height: 9px; }
.t9 { padding: 33px 0 0 43px; display: flex; flex-direction: column; }
.t9 .box { width: 22px; height: 12px; }
.t9 svg { margin-left: 8px; }

.scroll { display: grid; background: #dadada; margin: 2px 0; }
.scroll button, .grip { background: #fff; border: 1px solid #b5b5b5; }
.scroll .caret { border-left-width: 4px; border-right-width: 4px; }
.scroll-left { grid-template-rows: 15px 1fr 340px 15px; }
.scroll .jump { border: 0; background: #e6e6e6; }

.editor { display: grid; grid-template-columns: 1fr 16px; border-bottom: 1px solid #c6c6c6; margin-bottom: 2px; min-height: 0; }
.scroll-right { grid-template-rows: 15px 1fr 54px 15px 18px 18px; margin: 2px 1px 21px 0; }
.slide { position: relative; margin: 14px 96px 0 97px; aspect-ratio: 16 / 9; background: #fff; border: 1px solid #c6c6c6; padding: 62px 90px; font-family: Lato, sans-serif; font-variant-ligatures: none; color: #000; align-self: start; }
.slide h1 { margin: 0 0 47px; font-size: 49px; line-height: 64px; font-weight: 300; }
.slide li { font-size: 29px; line-height: 40px; display: flex; align-items: center; white-space: pre; }
.slide li::before { content: ""; width: 9px; height: 9px; border-radius: 50%; background: #000; margin-right: 12px; }
.slide .sub { font-size: 26px; line-height: 38px; padding-left: 43px; }
.slide .sub::before { width: 7px; height: 7px; margin-right: 14px; }
.slide .sub + li:not(.sub) { margin-top: 7px; }
.typo { text-decoration: underline wavy #e04040 1px; text-underline-offset: 3px; }
.cursor { position: absolute; left: 218px; top: 62px; }

/* Status bar */
.status { display: flex; align-items: center; height: 22px; background: #f3f3f3; border-top: 1px solid #c6c6c6; padding: 0 0 2px 8px; font-size: 11px; }
.s-book { margin: 0 18px 0 20px; }
.s-right { display: flex; align-items: center; margin: 0 0 -2px auto; height: 21px; padding-right: 6px; }
.s-notes, .s-comments { gap: 4px; margin-right: 19px; }
.view { width: 40px; height: 100%; }
.view.on { background: #c6c6c6; }
.zoom-step { width: 16px; font-size: 16px; }
.zoom-step.out { margin: 0 2px 0 3px; }
.status input { appearance: none; width: 102px; height: 12px; margin: 0; background: linear-gradient(#999, #999) center / 100% 1px no-repeat; }
.status input::-webkit-slider-thumb { appearance: none; width: 6px; height: 12px; background: #666; }
.percent { margin: 0 13px 0 9px; }

/* Taskbar */
.taskbar { display: flex; justify-content: space-between; height: 40px; background: #26231d; color: #fff; font-size: 12px; }
.apps { display: grid; grid-template-columns: repeat(22, 1fr); width: 67.5%; }
.apps button { position: relative; padding-bottom: 1px; }
.apps .active { background: #514e49; }
.run::after { content: ""; position: absolute; left: 4px; right: 4px; bottom: 0; height: 2px; background: #76b9ed; }
.active::after { left: 0; right: 0; }
.tray { display: flex; align-items: center; padding: 0 4px 2px 0; }
.t-desk { margin-right: 7px; color: #ddd; }
.t-person { margin-bottom: 10px; }
.t-more { font-size: 16px; margin: 0 11px 20px 1px; }
.t-batt { margin-left: 10px; }
.t-vol { margin: 0 9px 0 8px; }
.t-clock { display: grid; text-align: center; line-height: 18px; margin: 0 13px 0 10px; }
.t-note { position: relative; padding-right: 12px; border-right: 1px solid #888; height: 38px; }
.t-note span { position: absolute; left: 14px; top: 15px; }

.tip { position: absolute; left: 591px; top: -1px; height: 34px; border: 2px solid #000; background: #ffffcb; color: #000; font-size: 15px; line-height: 30px; padding: 0 10px 0 7px; white-space: nowrap; }

/* Meeting control dock at the window edge */
.dock { position: absolute; right: -1px; top: -1px; width: 39px; background: #e3e3e3; border-left: 2px solid #999; border-bottom: 2px solid #fff; border-radius: 0 0 0 5px; display: flex; flex-direction: column; align-items: flex-end; overflow: hidden; }
.dock > * { width: 35px; justify-content: flex-start; border-bottom: 2px solid #c3c3c3; }
.d-top { height: 14px; padding-left: 2px; }
.dock button { height: 51px; }
.dock .d-grip { height: 16px; margin: 4px 0 3px; border: 0; background: radial-gradient(circle, #223 1px, transparent 1px) 0 0 / 6px 6px, radial-gradient(circle, #223 1px, transparent 1px) 3px 3px / 6px 6px; }
```
